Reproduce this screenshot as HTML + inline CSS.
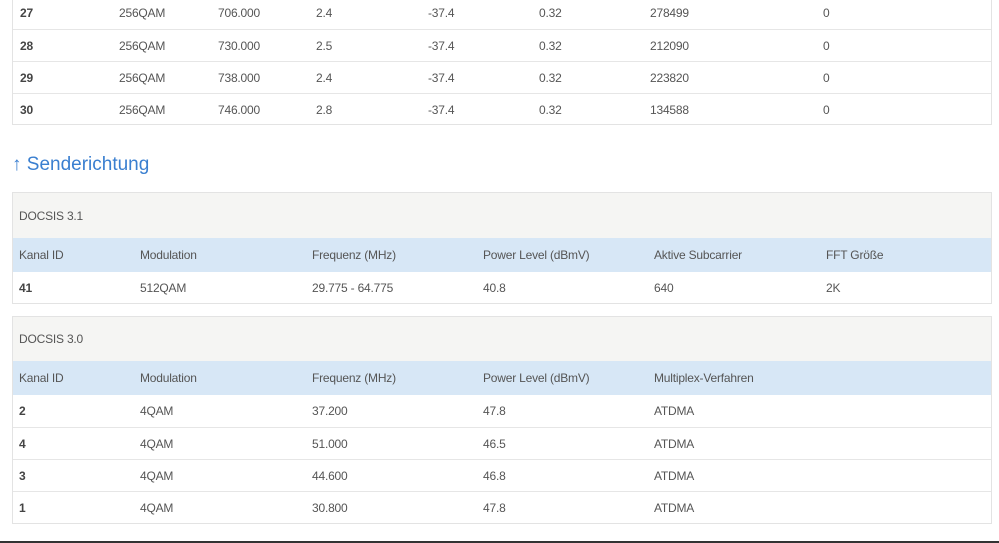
<!DOCTYPE html>
<html><head><meta charset="utf-8"><style>
*{margin:0;padding:0;box-sizing:border-box}
body{width:999px;height:543px;background:#fff;font-family:"Liberation Sans",sans-serif;font-size:12px;color:#555;position:relative;overflow:hidden;letter-spacing:-0.2px}
.box{position:absolute;left:12px;width:980px;border:1px solid #e3e3e3}
.r{position:absolute;left:0;right:0;border-top:1px solid #e6e6e6}
.r span{position:absolute;top:50%;transform:translateY(-50%);white-space:nowrap}
b{font-weight:bold;color:#444}
.g{background:#f5f5f3;border-top:none}
.bl{background:#d7e7f6;border-top:none}
</style></head><body>
<div class="box" style="top:-4px;height:129px">
 <div class="r" style="top:0;height:32px;border-top:none"><span style="left:7px"><b>27</b></span><span style="left:106px">256QAM</span><span style="left:205px">706.000</span><span style="left:303px">2.4</span><span style="left:415px">-37.4</span><span style="left:526px">0.32</span><span style="left:637px">278499</span><span style="left:810px">0</span></div>
 <div class="r" style="top:32px;height:32px"><span style="left:7px"><b>28</b></span><span style="left:106px">256QAM</span><span style="left:205px">730.000</span><span style="left:303px">2.5</span><span style="left:415px">-37.4</span><span style="left:526px">0.32</span><span style="left:637px">212090</span><span style="left:810px">0</span></div>
 <div class="r" style="top:64px;height:32px"><span style="left:7px"><b>29</b></span><span style="left:106px">256QAM</span><span style="left:205px">738.000</span><span style="left:303px">2.4</span><span style="left:415px">-37.4</span><span style="left:526px">0.32</span><span style="left:637px">223820</span><span style="left:810px">0</span></div>
 <div class="r" style="top:96px;height:32px"><span style="left:7px"><b>30</b></span><span style="left:106px">256QAM</span><span style="left:205px">746.000</span><span style="left:303px">2.8</span><span style="left:415px">-37.4</span><span style="left:526px">0.32</span><span style="left:637px">134588</span><span style="left:810px">0</span></div>
</div>
<div style="position:absolute;left:12px;top:154px;font-size:19px;color:#3a7fd0;letter-spacing:0">↑ Senderichtung</div>
<div class="box" style="top:192px;height:112px">
 <div class="r g" style="top:0;height:45px"><span style="left:6px">DOCSIS 3.1</span></div>
 <div class="r bl" style="top:45px;height:34px"><span style="left:6px">Kanal ID</span><span style="left:127px">Modulation</span><span style="left:299px">Frequenz (MHz)</span><span style="left:470px">Power Level (dBmV)</span><span style="left:641px">Aktive Subcarrier</span><span style="left:813px">FFT Größe</span></div>
 <div class="r" style="top:79px;height:32px;border-top:none"><span style="left:6px"><b>41</b></span><span style="left:127px">512QAM</span><span style="left:299px">29.775 - 64.775</span><span style="left:470px">40.8</span><span style="left:641px">640</span><span style="left:813px">2K</span></div>
</div>
<div class="box" style="top:316px;height:208px">
 <div class="r g" style="top:0;height:44px"><span style="left:6px">DOCSIS 3.0</span></div>
 <div class="r bl" style="top:44px;height:34px"><span style="left:6px">Kanal ID</span><span style="left:127px">Modulation</span><span style="left:299px">Frequenz (MHz)</span><span style="left:470px">Power Level (dBmV)</span><span style="left:641px">Multiplex-Verfahren</span></div>
 <div class="r" style="top:78px;height:32px;border-top:none"><span style="left:6px"><b>2</b></span><span style="left:127px">4QAM</span><span style="left:299px">37.200</span><span style="left:470px">47.8</span><span style="left:641px">ATDMA</span></div>
 <div class="r" style="top:110px;height:32px"><span style="left:6px"><b>4</b></span><span style="left:127px">4QAM</span><span style="left:299px">51.000</span><span style="left:470px">46.5</span><span style="left:641px">ATDMA</span></div>
 <div class="r" style="top:142px;height:32px"><span style="left:6px"><b>3</b></span><span style="left:127px">4QAM</span><span style="left:299px">44.600</span><span style="left:470px">46.8</span><span style="left:641px">ATDMA</span></div>
 <div class="r" style="top:174px;height:32px"><span style="left:6px"><b>1</b></span><span style="left:127px">4QAM</span><span style="left:299px">30.800</span><span style="left:470px">47.8</span><span style="left:641px">ATDMA</span></div>
</div>
<div style="position:absolute;left:0;top:541px;width:999px;height:2px;background:#333"></div>
</body></html>
